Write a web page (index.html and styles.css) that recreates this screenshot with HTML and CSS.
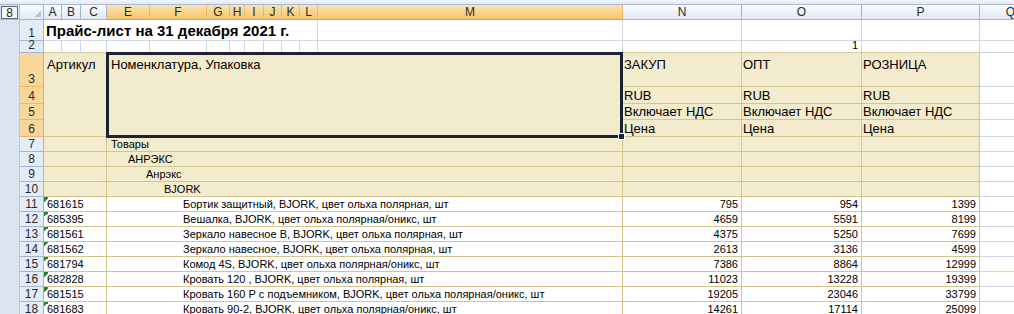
FILE: index.html
```html
<!DOCTYPE html>
<html lang="ru">
<head>
<meta charset="utf-8">
<title>Прайс-лист</title>
<link rel="stylesheet" href="styles.css">
</head>
<body>
<div class="topbar"></div>
<div class="sheet">
  <div class="outline"><span>8</span></div>
  <div class="corner"></div>
  <div class="ch">A</div><div class="ch">B</div><div class="ch">C</div>
  <div class="ch sel">E</div><div class="ch sel">F</div><div class="ch sel">G</div><div class="ch sel">H</div><div class="ch sel">I</div><div class="ch sel">J</div><div class="ch sel">K</div><div class="ch sel">L</div><div class="ch sel">M</div>
  <div class="ch">N</div><div class="ch">O</div><div class="ch">P</div><div class="ch">Q</div>
  <div class="gutter"></div>

  <!-- row 1 -->
  <div class="rh">1</div>
  <div class="c title">Прайс-лист на 31 декабря 2021 г.</div>
  <div class="c"></div><div class="c"></div><div class="c"></div><div class="c"></div><div class="c"></div>

  <!-- row 2 -->
  <div class="rh">2</div>
  <div class="c t"></div><div class="c t"></div><div class="c t"></div><div class="c t"></div><div class="c t"></div><div class="c t"></div><div class="c t"></div><div class="c t"></div><div class="c t"></div><div class="c t"></div><div class="c t"></div><div class="c t"></div>
  <div class="c t"></div><div class="c t num">1</div><div class="c t"></div><div class="c"></div>

  <!-- rows 3-6 -->
  <div class="rh sel">3</div>
  <div class="c b h top art">Артикул</div>
  <div class="c b h top nom">Номенклатура, Упаковка</div>
  <div class="c b h top p1">ЗАКУП</div><div class="c b h top p1">ОПТ</div><div class="c b h top p1">РОЗНИЦА</div><div class="c"></div>

  <div class="rh sel">4</div>
  <div class="c b h p1">RUB</div><div class="c b h p1">RUB</div><div class="c b h p1">RUB</div><div class="c"></div>

  <div class="rh sel">5</div>
  <div class="c b h p1">Включает НДС</div><div class="c b h p1">Включает НДС</div><div class="c b h p1">Включает НДС</div><div class="c"></div>

  <div class="rh sel">6</div>
  <div class="c b h p1">Цена</div><div class="c b h p1">Цена</div><div class="c b h p1">Цена</div><div class="c"></div>

  <!-- rows 7-10 -->
  <div class="rh">7</div>
  <div class="c b ac"></div><div class="c b em lv0">Товары</div>
  <div class="c b"></div><div class="c b"></div><div class="c b"></div><div class="c"></div>

  <div class="rh">8</div>
  <div class="c b ac"></div><div class="c b em lv1">АНРЭКС</div>
  <div class="c b"></div><div class="c b"></div><div class="c b"></div><div class="c"></div>

  <div class="rh">9</div>
  <div class="c b ac"></div><div class="c b em lv2">Анрэкс</div>
  <div class="c b"></div><div class="c b"></div><div class="c b"></div><div class="c"></div>

  <div class="rh">10</div>
  <div class="c b ac"></div><div class="c b em lv3">BJORK</div>
  <div class="c b"></div><div class="c b"></div><div class="c b"></div><div class="c"></div>

  <!-- rows 11-18 -->
  <div class="rh">11</div>
  <div class="c d ac code">681615</div><div class="c d em lv4">Бортик защитный, BJORK, цвет ольха полярная, шт</div>
  <div class="c d num">795</div><div class="c d num">954</div><div class="c d num">1399</div><div class="c"></div>

  <div class="rh">12</div>
  <div class="c d ac code">685395</div><div class="c d em lv4">Вешалка, BJORK, цвет ольха полярная/оникс, шт</div>
  <div class="c d num">4659</div><div class="c d num">5591</div><div class="c d num">8199</div><div class="c"></div>

  <div class="rh">13</div>
  <div class="c d ac code">681561</div><div class="c d em lv4">Зеркало навесное В, BJORK, цвет ольха полярная, шт</div>
  <div class="c d num">4375</div><div class="c d num">5250</div><div class="c d num">7699</div><div class="c"></div>

  <div class="rh">14</div>
  <div class="c d ac code">681562</div><div class="c d em lv4">Зеркало навесное, BJORK, цвет ольха полярная, шт</div>
  <div class="c d num">2613</div><div class="c d num">3136</div><div class="c d num">4599</div><div class="c"></div>

  <div class="rh">15</div>
  <div class="c d ac code">681794</div><div class="c d em lv4">Комод 4S, BJORK, цвет ольха полярная/оникс, шт</div>
  <div class="c d num">7386</div><div class="c d num">8864</div><div class="c d num">12999</div><div class="c"></div>

  <div class="rh">16</div>
  <div class="c d ac code">682828</div><div class="c d em lv4">Кровать 120 , BJORK, цвет ольха полярная, шт</div>
  <div class="c d num">11023</div><div class="c d num">13228</div><div class="c d num">19399</div><div class="c"></div>

  <div class="rh">17</div>
  <div class="c d ac code">681515</div><div class="c d em lv4">Кровать 160 Р с подъемником, BJORK, цвет ольха полярная/оникс, шт</div>
  <div class="c d num">19205</div><div class="c d num">23046</div><div class="c d num">33799</div><div class="c"></div>

  <div class="rh">18</div>
  <div class="c d ac code">681683</div><div class="c d em lv4">Кровать 90-2, BJORK, цвет ольха полярная/оникс, шт</div>
  <div class="c d num">14261</div><div class="c d num">17114</div><div class="c d num">25099</div><div class="c"></div>
</div>
</body>
</html>
```

FILE: styles.css
```css
html, body {
  margin: 0;
  padding: 0;
  width: 1014px;
  height: 314px;
  overflow: hidden;
  background: #ffffff;
  font-family: "Liberation Sans", Arial, sans-serif;
  color: #000;
}

.topbar {
  height: 4px;
  background: linear-gradient(#f3f6fb, #dfe8f4);
  border-bottom: 1px solid #a7bbd4;
}

.sheet {
  display: grid;
  grid-template-columns: 20px 24px 18px 19px 26px 43px 57px 23px 15px 19px 18px 18px 18px 305px 119px 120px 118px 62px;
  grid-template-rows: 15px 21px 12px 34px 17px 16px 17px repeat(12, 15px);
  width: 1042px;
}

/* outline level button */
.outline {
  background: #dbe5f1;
  border-right: 1px solid #b6c8de;
  border-bottom: 1px solid #9eb6ce;
  box-sizing: border-box;
  padding: 0 1px 0 1px;
  display: flex;
}
.outline span {
  flex: 1;
  border: 1px solid #5f6b78;
  background: #f4f7fb;
  font-size: 12px;
  line-height: 12px;
  text-align: center;
  color: #222;
  margin-top: 1px;
}

.corner {
  background:
    linear-gradient(135deg, transparent 50%, #b4c5da 50%) right 2px bottom 2px / 7px 7px no-repeat,
    linear-gradient(#f9fbfd, #e3eaf5);
  border-right: 1px solid #9eb6ce;
  border-bottom: 1px solid #9eb6ce;
}

.ch {
  background: linear-gradient(#f9fbfd, #e2e9f4);
  border-right: 1px solid #9eb6ce;
  border-bottom: 1px solid #9eb6ce;
  font-size: 12px;
  line-height: 14px;
  color: #2a2a2a;
  text-align: center;
  overflow: hidden;
  white-space: nowrap;
}
.ch.sel {
  background: linear-gradient(#fbe3b2, #f6c66d);
  border-right-color: #f3b560;
  border-bottom-color: #ee9a35;
}

.gutter {
  grid-column: 1;
  grid-row: 2 / 20;
  background: #dbe5f1;
  border-right: 1px solid #b6c8de;
}

.rh {
  background: #e4ecf7;
  border-right: 1px solid #9eb6ce;
  border-bottom: 1px solid #9eb6ce;
  font-size: 12px;
  line-height: 13px;
  color: #2a2a2a;
  display: flex;
  align-items: flex-end;
  justify-content: center;
}
.rh.sel {
  background: #f9d699;
  border-right-color: #f1a948;
  border-bottom-color: #f3b565;
}

.c {
  box-sizing: border-box;
  border-right: 1px solid #d0d7e5;
  border-bottom: 1px solid #d0d7e5;
  display: flex;
  align-items: flex-end;
  font-size: 11px;
  line-height: 13px;
  white-space: nowrap;
  padding: 0 3px;
  min-width: 0;
}
.c.t { border-bottom-color: #d9cc9c; }

.title {
  grid-column: span 11;
  font-size: 15px;
  font-weight: bold;
  line-height: 17px;
  padding-left: 2px;
  padding-bottom: 1px;
}

.num { justify-content: flex-end; padding-right: 3px; }

.b {
  background: #f3ebcd;
  border-right-color: #d4c48e;
  border-bottom-color: #d4c48e;
}
.d {
  background: #ffffff;
  border-right-color: #d4c48e;
  border-bottom-color: #d4c48e;
}

.h { font-size: 13px; line-height: 15px; }
.h.top { align-items: flex-start; padding-top: 4px; }
.p1 { padding-left: 1px; }

.art {
  grid-column: span 3;
  grid-row: span 4;
  padding-left: 3px;
}
.nom {
  grid-column: span 9;
  grid-row: span 4;
  position: relative;
  z-index: 2;
  padding-left: 4px;
}
.nom::after {
  content: "";
  position: absolute;
  left: -1px;
  top: -1px;
  right: -1px;
  bottom: -2px;
  border: 3px solid #1b2236;
}
.nom::before {
  content: "";
  position: absolute;
  right: -3px;
  bottom: -4px;
  width: 5px;
  height: 5px;
  background: #1b2236;
  border: 1px solid #ffffff;
  z-index: 3;
}

.ac { grid-column: span 3; padding-left: 3px; }
.em { grid-column: span 9; }
.lv0 { padding-left: 4px; }
.lv1 { padding-left: 21px; }
.lv2 { padding-left: 39px; }
.lv3 { padding-left: 57px; }
.lv4 { padding-left: 76px; }

.code {
  background:
    linear-gradient(135deg, #1e8a2c 50%, transparent 50%) left top / 5px 5px no-repeat,
    #ffffff;
}
```
